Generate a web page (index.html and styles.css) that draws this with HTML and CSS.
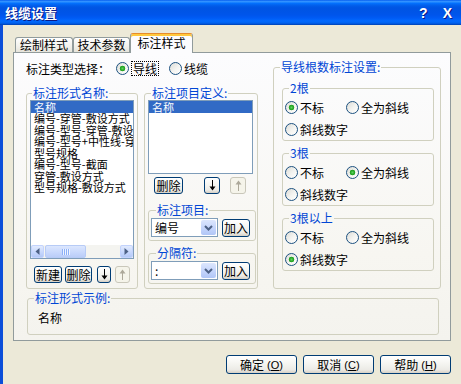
FILE: index.html
```html
<!DOCTYPE html>
<html lang="zh-CN">
<head>
<meta charset="utf-8">
<title>线缆设置</title>
<link rel="stylesheet" href="styles.css">
</head>
<body>
<div class="win">
  <div class="titlebar">
    <span class="title">线缆设置</span>
    <span class="tb-btn help">?</span>
    <span class="tb-btn close">X</span>
  </div>
  <div class="client">
    <div class="tabs">
      <div class="tab t1">绘制样式</div>
      <div class="tab t2">技术参数</div>
      <div class="tab active">标注样式</div>
    </div>
    <div class="panel">
      <div class="leftcol">
        <div class="typerow">
          <span class="typelabel">标注类型选择：</span>
          <span class="radio"><span class="rb on"></span><span class="focus">导线</span></span>
          <span class="radio r-cable"><span class="rb"></span><span>线缆</span></span>
        </div>
        <div class="cols">
          <fieldset class="grp g-names">
            <legend>标注形式名称:</legend>
            <div class="gb gb-names">
              <div class="listbox lb-names">
                <div class="items">
                  <div class="item sel">名称</div>
                  <div class="item">编号-穿管-敷设方式</div>
                  <div class="item">编号-型号-穿管-敷设方式</div>
                  <div class="item">编号-型号+中性线-穿管-敷设方式</div>
                  <div class="item">型号规格</div>
                  <div class="item">编号-型号-截面</div>
                  <div class="item">穿管-敷设方式</div>
                  <div class="item">型号规格-敷设方式</div>
                </div>
                <div class="hscroll">
                  <span class="sb-btn"><svg width="5" height="7" viewBox="0 0 5 7"><path d="M4.5 0 L0.5 3.5 L4.5 7 Z" fill="#4D6185"/></svg></span>
                  <span class="sb-track"><span class="sb-thumb"><span class="grip"></span></span></span>
                  <span class="sb-btn"><svg width="5" height="7" viewBox="0 0 5 7"><path d="M0.5 0 L4.5 3.5 L0.5 7 Z" fill="#4D6185"/></svg></span>
                </div>
              </div>
              <div class="btnrow br-names">
                <button class="btn b-new">新建</button>
                <button class="btn b-del">删除</button>
                <button class="btn b-arr b-down1"><svg width="7" height="11" viewBox="0 0 7 11"><path d="M3.5 0 V9" stroke="#000" stroke-width="1"/><path d="M0.5 6.5 L3.5 10.5 L6.5 6.5 Z" fill="#000"/></svg></button>
                <button class="btn b-arr b-up1" disabled><svg width="7" height="11" viewBox="0 0 7 11"><path d="M3.5 2 V11" stroke="#ACA899" stroke-width="1"/><path d="M0.5 4.5 L3.5 0.5 L6.5 4.5 Z" fill="#ACA899"/></svg></button>
              </div>
            </div>
          </fieldset>
          <fieldset class="grp g-def">
            <legend>标注项目定义:</legend>
            <div class="gb gb-def">
              <div class="listbox lb-def">
                <div class="items">
                  <div class="item sel">名称</div>
                </div>
              </div>
              <div class="btnrow br-def">
                <button class="btn b-del2">删除</button>
                <button class="btn b-arr2 b-down2"><svg width="7" height="11" viewBox="0 0 7 11"><path d="M3.5 0 V9" stroke="#000" stroke-width="1"/><path d="M0.5 6.5 L3.5 10.5 L6.5 6.5 Z" fill="#000"/></svg></button>
                <button class="btn b-arr2 b-up2" disabled><svg width="7" height="11" viewBox="0 0 7 11"><path d="M3.5 2 V11" stroke="#ACA899" stroke-width="1"/><path d="M0.5 4.5 L3.5 0.5 L6.5 4.5 Z" fill="#ACA899"/></svg></button>
              </div>
              <fieldset class="grp sub-mid s-item">
                <legend>标注项目:</legend>
                <div class="gb gb-submid">
                  <div class="combo"><span class="cv">编号</span><span class="dd"><svg width="9" height="6" viewBox="0 0 9 6"><path d="M1 1 L4.5 4.5 L8 1" stroke="#4D6185" stroke-width="2" fill="none"/></svg></span></div>
                  <button class="btn b-add">加入</button>
                </div>
              </fieldset>
              <fieldset class="grp sub-mid s-sep">
                <legend>分隔符:</legend>
                <div class="gb gb-submid">
                  <div class="combo"><span class="cv">:</span><span class="dd"><svg width="9" height="6" viewBox="0 0 9 6"><path d="M1 1 L4.5 4.5 L8 1" stroke="#4D6185" stroke-width="2" fill="none"/></svg></span></div>
                  <button class="btn b-add">加入</button>
                </div>
              </fieldset>
            </div>
          </fieldset>
        </div>
      </div>

      <fieldset class="grp g-right">
        <legend>导线根数标注设置:</legend>
        <div class="gb gb-right">
          <fieldset class="grp sub-r">
            <legend>2根</legend>
            <div class="gb gb-subr">
              <div class="rrow">
                <span class="radio rc"><span class="rb on"></span><span>不标</span></span>
                <span class="radio"><span class="rb"></span><span>全为斜线</span></span>
              </div>
              <div class="rrow">
                <span class="radio rc"><span class="rb"></span><span>斜线数字</span></span>
              </div>
            </div>
          </fieldset>
          <fieldset class="grp sub-r">
            <legend>3根</legend>
            <div class="gb gb-subr">
              <div class="rrow">
                <span class="radio rc"><span class="rb"></span><span>不标</span></span>
                <span class="radio"><span class="rb on"></span><span>全为斜线</span></span>
              </div>
              <div class="rrow">
                <span class="radio rc"><span class="rb"></span><span>斜线数字</span></span>
              </div>
            </div>
          </fieldset>
          <fieldset class="grp sub-r">
            <legend>3根以上</legend>
            <div class="gb gb-subr">
              <div class="rrow">
                <span class="radio rc"><span class="rb"></span><span>不标</span></span>
                <span class="radio"><span class="rb"></span><span>全为斜线</span></span>
              </div>
              <div class="rrow">
                <span class="radio rc"><span class="rb on"></span><span>斜线数字</span></span>
              </div>
            </div>
          </fieldset>
        </div>
      </fieldset>

      <fieldset class="grp g-example">
        <legend>标注形式示例:</legend>
        <div class="gb gb-example">名称</div>
      </fieldset>
    </div>

    <div class="footer">
      <button class="btn fbtn">确定 <span class="acc">(<u>O</u>)</span></button>
      <button class="btn fbtn">取消 <span class="acc">(<u>C</u>)</span></button>
      <button class="btn fbtn">帮助 <span class="acc">(<u>H</u>)</span></button>
    </div>
  </div>
</div>
</body>
</html>
```

FILE: styles.css
```css
* { box-sizing: border-box; }

body {
  margin: 0;
  width: 461px;
  height: 384px;
  overflow: hidden;
  background: #ECE9D8;
  font-family: "Noto Sans CJK SC", "Noto Sans", sans-serif;
  font-size: 12px;
  color: #000;
}

.win {
  height: 384px;
  display: flex;
  flex-direction: column;
}

/* ---------- title bar ---------- */
.titlebar {
  height: 25px;
  flex: none;
  display: flex;
  align-items: center;
  padding: 0 9px 0 5px;
  background: linear-gradient(to bottom,
    #0058EE 0%, #3593FF 5%, #288EFF 8%, #127DFF 11%, #036FFC 14%,
    #0262EE 20%, #0057E5 28%, #0054E3 35%, #0055EB 60%, #005BF5 72%,
    #026AFE 84%, #0062EF 92%, #0052D6 96%, #0040AB 100%);
}
.title {
  flex: 1;
  color: #fff;
  font-weight: bold;
  font-size: 13px;
  line-height: 16px;
  text-shadow: 1px 1px 0 #0A1883;
}
.tb-btn {
  color: #fff;
  font-family: "Liberation Sans", "DejaVu Sans", sans-serif;
  font-weight: bold;
  font-size: 14px;
  line-height: 16px;
  text-shadow: 1px 1px 0 #0A1883;
}
.help { margin-right: 15px; }

/* ---------- client ---------- */
.client {
  flex: 1;
  border-left: 3px solid #0B4ED9;
}

.tabs {
  position: relative;
  display: flex;
  align-items: flex-end;
  height: 20px;
  margin: 8px 0 -1px 12px;
}
.tab {
  height: 15px;
  margin-bottom: 1px;
  border: 1px solid #919B9C;
  border-bottom: none;
  border-radius: 3px 3px 0 0;
  background: linear-gradient(#FFFFFF, #F2F1EC 60%, #E6E4DB);
  line-height: 13px;
  text-align: center;
}
.t1 { width: 58px; }
.t2 { width: 57px; }
.tab.active {
  width: 63px;
  height: 20px;
  margin-bottom: 0;
  border-top: 1px solid #E68B2C;
  box-shadow: inset 0 2px 0 #FFC83C;
  background: #FCFCFE;
  padding-top: 2px;
  line-height: 14px;
}

.panel {
  margin-left: 10px;
  width: 438px;
  border: 1px solid #919B9C;
  background: linear-gradient(#FCFCFE, #F7F6F1 70%, #F4F3EE);
  display: grid;
  grid-template-columns: 232px 168px;
  column-gap: 15px;
  padding: 7px 9px 5px 12px;
}

/* ---------- group boxes ---------- */
.grp {
  margin: 0;
  padding: 0;
  min-width: 0;
  border: 1px solid #D0D0BF;
  border-radius: 3px;
}
.grp > legend {
  margin-left: 6px;
  padding: 0 1px;
  font-size: 12px;
  line-height: 14px;
  color: #0046D5;
}

.leftcol {
  display: flex;
  flex-direction: column;
}
.typerow {
  height: 16px;
  display: flex;
  align-items: center;
}
.typelabel { width: 90px; }

.radio {
  display: flex;
  align-items: center;
  gap: 2px;
  white-space: nowrap;
}
.rb {
  width: 13px;
  height: 13px;
  border-radius: 50%;
  border: 1px solid #1C5180;
  background: linear-gradient(135deg, #DCDCD7 0%, #F4F4F1 55%, #FFFFFF 100%);
  flex: none;
}
.rb.on {
  background:
    radial-gradient(circle at 50% 50%, #5FD35F 0, #2BA92B 1.8px, #21A121 2.6px, transparent 3.1px),
    linear-gradient(135deg, #DCDCD7 0%, #F4F4F1 55%, #FFFFFF 100%);
}
.focus {
  border: 1px dotted #000;
  padding: 0 1px;
  line-height: 13px;
}
.r-cable { margin-left: 10px; }

.cols {
  flex: 1;
  display: flex;
  gap: 6px;
  margin-top: 10px;
}
.g-names { width: 112px; }
.g-names > legend { margin-left: 5px; }
.g-def { width: 114px; }

.gb-names { padding: 0 3px; }
.gb-def { padding: 0 4px 0 3px; }

.listbox {
  border: 1px solid #7F9DB9;
  background: #fff;
  display: flex;
  flex-direction: column;
  overflow: hidden;
}
.lb-names { height: 159px; }
.lb-def { height: 74px; }
.items {
  flex: 1;
  overflow: hidden;
}
.item {
  white-space: nowrap;
  font-size: 11px;
  line-height: 11.5px;
  padding-left: 3px;
}
.item.sel {
  background: #316AC5;
  color: #fff;
  line-height: 12px;
}

.hscroll {
  height: 13px;
  flex: none;
  display: flex;
  background: #F4F4F0;
}
.sb-btn {
  width: 13px;
  height: 13px;
  flex: none;
  display: flex;
  align-items: center;
  justify-content: center;
  border: 1px solid #C3D3FD;
  border-radius: 2px;
  background: linear-gradient(#E2EBFE, #C5D6FC 60%, #B3C8F6);
}
.sb-track {
  flex: 1;
  display: flex;
  padding-left: 1px;
}
.sb-thumb {
  width: 41px;
  height: 13px;
  display: flex;
  align-items: center;
  justify-content: center;
  border: 1px solid #B7CBF6;
  border-radius: 2px;
  background: linear-gradient(#DCE7FE, #C7D7FC 60%, #BACDF8);
}
.grip {
  width: 8px;
  height: 6px;
  background: repeating-linear-gradient(to right, #8CB0F8 0 1px, #EEF4FE 1px 2px);
}

/* ---------- buttons ---------- */
.btn {
  margin: 0;
  padding: 0;
  font-family: "Noto Sans CJK SC", "Noto Sans", sans-serif;
  font-size: 12px;
  line-height: 14px;
  color: #000;
  border: 1px solid #003C74;
  border-radius: 3px;
  background: linear-gradient(#FFFFFF 0%, #F5F5F1 45%, #ECEBE6 80%, #D6D0C5 100%);
  display: flex;
  align-items: center;
  justify-content: center;
}
.btn:disabled {
  border-color: #C9C7BA;
  background: #F5F4EA;
  color: #ACA899;
}
.btnrow {
  display: flex;
  align-items: center;
}
.br-names {
  margin: 7px 0 0 4px;
  height: 17px;
}
.br-names .btn { height: 17px; }
.b-new { width: 28px; }
.b-del { width: 27px; margin-left: 3px; }
.b-down1 { width: 14px; margin-left: 5px; }
.b-up1 { width: 15px; margin-left: 4px; }

.br-def {
  margin: 3px 0 0 6px;
  height: 17px;
}
.br-def .btn { height: 17px; }
.b-del2 { width: 29px; }
.b-down2 { width: 16px; margin-left: 21px; }
.b-up2 { width: 16px; margin-left: 10px; }

.sub-mid {
  width: 108px;
  margin-top: 9px;
}
.sub-mid > legend { margin-left: 7px; }
.s-sep { margin-top: 5px; }
.gb-submid {
  display: flex;
  align-items: center;
  padding: 1px 0 3px 2px;
}
.combo {
  width: 67px;
  height: 19px;
  display: flex;
  border: 1px solid #7F9DB9;
  background: #fff;
}
.cv {
  flex: 1;
  padding-left: 3px;
  line-height: 17px;
}
.dd {
  width: 15px;
  margin: 1px;
  display: flex;
  align-items: center;
  justify-content: center;
  border-radius: 2px;
  background: linear-gradient(#DCE6FD, #C2D3FB 60%, #B1C6F6);
}
.b-add {
  width: 28px;
  height: 18px;
  margin-left: 4px;
}

/* ---------- right group ---------- */
.gb-right {
  padding: 7px 6px 17px 8px;
}
.sub-r + .sub-r { margin-top: 5px; }
.gb-subr {
  padding: 1px 0 0 2px;
}
.rrow {
  height: 22px;
  display: flex;
  align-items: center;
}
.rc { width: 61px; }

/* ---------- example ---------- */
.g-example {
  grid-column: 1 / span 2;
  width: 412px;
  margin-left: 1px;
  margin-top: 2px;
}
.gb-example {
  padding: 6px 0 9px 10px;
  line-height: 14px;
}

/* ---------- footer ---------- */
.footer {
  display: flex;
  justify-content: flex-end;
  gap: 6px;
  margin-top: 14px;
  padding-right: 10px;
}
.fbtn {
  width: 71px;
  height: 19px;
  gap: 0;
}
.acc {
  font-family: "Liberation Sans", "DejaVu Sans", sans-serif;
  font-size: 11px;
  margin-left: 3px;
}
```
